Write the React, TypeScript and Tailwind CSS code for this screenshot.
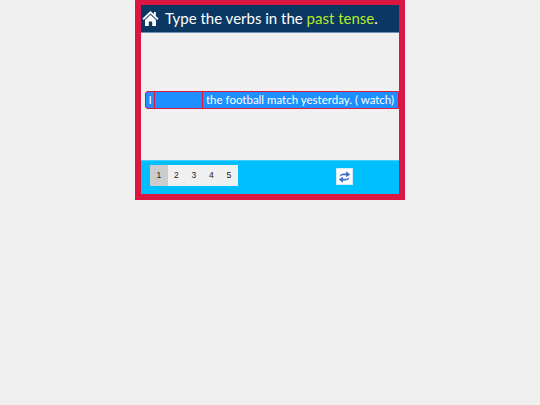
import { useState } from 'react';

const pages = ['1', '2', '3', '4', '5'];

function HomeIcon() {
  return (
    <svg viewBox="0 0 18 17" className="w-[17px] h-[17px]" fill="#fff">
      <path d="M9 0.5 L0.5 8.6 L1.8 10 L9 3.2 L16.2 10 L17.5 8.6 L14.6 5.8 V1.5 H12.6 V3.9 Z" />
      <path d="M3.2 10 L9 4.6 L14.8 10 V16.5 H10.8 V11.6 H7.2 V16.5 H3.2 Z" />
    </svg>
  );
}

function RefreshIcon() {
  return (
    <svg viewBox="0 0 16 16" className="w-[13px] h-[14px]" fill="#3a6fc9">
      <path d="M2 8 C2 5 4 3.6 7 3.6 H10 V1 L15 4.8 L10 8.4 V5.8 H7 C4.5 5.8 3 6.4 2 8 Z" />
      <path d="M14 8 C14 11 12 12.4 9 12.4 H6 V15 L1 11.2 L6 7.6 V10.2 H9 C11.5 10.2 13 9.6 14 8 Z" />
    </svg>
  );
}

export default function App() {
  const [answer, setAnswer] = useState('');
  const [page, setPage] = useState('1');

  return (
    <div className="w-[540px] h-[405px] bg-[#f0f0f0] flex justify-center items-start font-['Lato',sans-serif]">
      <div className="w-[270px] h-[200px] border-x-[6px] border-b-[6px] border-t-[5px] border-[#dc1643] flex flex-col">
        {/* Header */}
        <div className="h-[28px] bg-[#0b3763] flex items-center pl-[1px] border-b border-[#6f8fb5]">
          <HomeIcon />
          <span className="ml-[6px] text-[15px] text-white whitespace-nowrap">
            Type the verbs in the <span className="text-[#b4e82a]">past tense</span>.
          </span>
        </div>

        {/* Question */}
        <div className="flex-1 flex items-center pl-[4px]">
          <div className="w-full h-[18px] mt-[6px] bg-[#1e8fff] border border-[#dc1643] rounded-l-[3px] flex items-center text-[11.5px] text-white whitespace-nowrap">
            <span className="w-[8px] text-center shrink-0">I</span>
            <input
              value={answer}
              onChange={e => setAnswer(e.target.value)}
              className="w-[49px] h-full shrink-0 bg-[#1e8fff] border-x border-[#dc1643] outline-none"
            />
            <span className="ml-[3px]">the football match yesterday. ( watch)</span>
          </div>
        </div>

        {/* Footer */}
        <div className="h-[34px] bg-[#00bfff] border-t border-[#3fd0ff] flex items-center pl-[9px] pb-[5px] relative">
          <div className="flex bg-[#f0f0f0]">
            {pages.map(p => (
              <button
                key={p}
                onClick={() => setPage(p)}
                className={`w-[17.5px] h-[21px] text-[8.5px] text-[#222] font-['Liberation_Sans',sans-serif] ${page === p ? 'bg-[#cccccc]' : ''}`}
              >
                {p}
              </button>
            ))}
          </div>
          <button className="ml-[98px] mt-[3px] w-[17px] h-[17px] bg-white border border-[#cfe9ff] flex items-center justify-center">
            <RefreshIcon />
          </button>
        </div>
      </div>
    </div>
  );
}
